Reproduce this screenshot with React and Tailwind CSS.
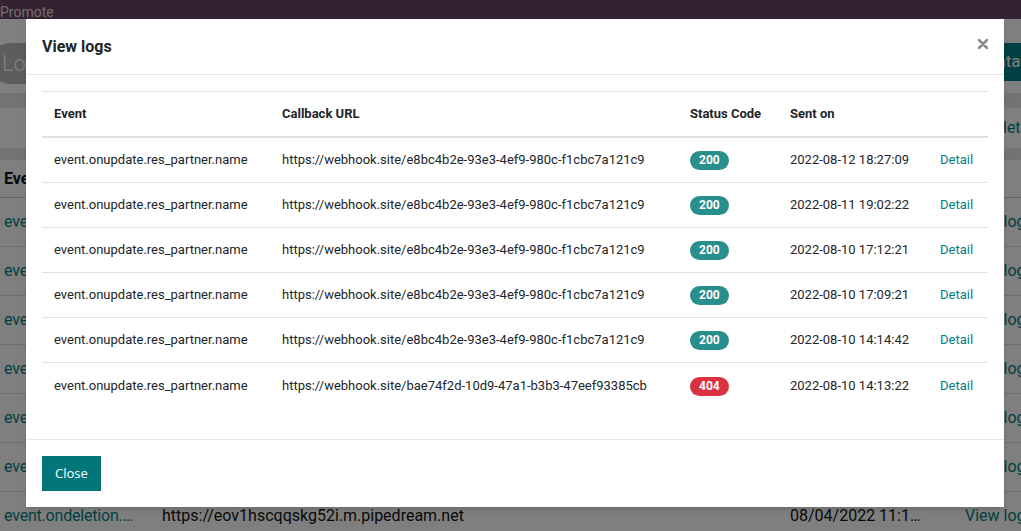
const logs = [
  { url: 'https://webhook.site/e8bc4b2e-93e3-4ef9-980c-f1cbc7a121c9', code: 200, sent: '2022-08-12 18:27:09' },
  { url: 'https://webhook.site/e8bc4b2e-93e3-4ef9-980c-f1cbc7a121c9', code: 200, sent: '2022-08-11 19:02:22' },
  { url: 'https://webhook.site/e8bc4b2e-93e3-4ef9-980c-f1cbc7a121c9', code: 200, sent: '2022-08-10 17:12:21' },
  { url: 'https://webhook.site/e8bc4b2e-93e3-4ef9-980c-f1cbc7a121c9', code: 200, sent: '2022-08-10 17:09:21' },
  { url: 'https://webhook.site/e8bc4b2e-93e3-4ef9-980c-f1cbc7a121c9', code: 200, sent: '2022-08-10 14:14:42' },
  { url: 'https://webhook.site/bae74f2d-10d9-47a1-b3b3-47eef93385cb', code: 404, sent: '2022-08-10 14:13:22' },
];

const webhooks = [
  { event: 'event.onupdate.res_partner.name', url: 'https://webhook.site/e8bc4b2e-93e3-4ef9-980c-f1cbc7a121c9', date: '08/12/2022 18:2…' },
  { event: 'event.oncreate.res_partner', url: 'https://webhook.site/e8bc4b2e-93e3-4ef9-980c-f1cbc7a121c9', date: '08/11/2022 19:0…' },
  { event: 'event.oncreate.sale_order', url: 'https://webhook.site/e8bc4b2e-93e3-4ef9-980c-f1cbc7a121c9', date: '08/10/2022 17:1…' },
  { event: 'event.onupdate.sale_order', url: 'https://webhook.site/e8bc4b2e-93e3-4ef9-980c-f1cbc7a121c9', date: '08/10/2022 17:0…' },
  { event: 'event.ondeletion.sale_order', url: 'https://webhook.site/e8bc4b2e-93e3-4ef9-980c-f1cbc7a121c9', date: '08/10/2022 14:1…' },
  { event: 'event.onupdate.product', url: 'https://webhook.site/bae74f2d-10d9-47a1-b3b3-47eef93385cb', date: '08/05/2022 09:4…' },
  { event: 'event.ondeletion.…', url: 'https://eov1hscqqskg52i.m.pipedream.net', date: '08/04/2022 11:1…' },
];

// page underneath the dialog
function Background() {
  return (
    <div className="flex flex-col">
      <div className="h-[19px] overflow-hidden bg-[#6a4260] pt-[4px] text-[14px] leading-[17px] text-white/80">
        Promote
      </div>
      <div className="flex h-[74px] justify-between pt-[24px]">
        <div className="-ml-[10px] flex h-[41px] items-center rounded-full bg-[#bababa] pl-[12px] pr-[24px] text-[22px] font-light text-white">
          Logs
        </div>
        <div className="-mr-[30px] flex h-[38px] items-center bg-[#017e84] px-[16px] text-[17px] text-white">
          Contact
        </div>
      </div>
      <div className="h-[15px] bg-[#e6e6e6]" />
      <div className="flex h-[40px] items-center pl-[984px] text-[16px] text-[#017e84] whitespace-nowrap">
        Delete
      </div>
      <div className="h-[12px] bg-[#e6e6e6]" />
      <div className="grid h-[38px] grid-cols-[162px_628px_175px_1fr] items-center border-b border-[#cfcfcf] text-[16px] font-bold text-[#111]">
        <div className="pl-[4px]">Event</div>
        <div>Callback URL</div>
        <div>Create Date</div>
        <div />
      </div>
      {webhooks.map((w, i) => (
        <div
          key={i}
          className="grid h-[49px] grid-cols-[162px_628px_175px_1fr] items-center border-b border-[#dcdcdc] text-[16px] whitespace-nowrap text-[#111]"
        >
          <div className="overflow-hidden pl-[4px] tracking-[-0.2px] text-[#017e84]">{w.event}</div>
          <div className="overflow-hidden">{w.url}</div>
          <div>{w.date}</div>
          <div className="text-[#017e84]">View logs</div>
        </div>
      ))}
    </div>
  );
}

function Badge({ code }) {
  const ok = code < 400;
  return (
    <span
      className={
        'inline-block rounded-full px-[9px] text-[12px] font-bold leading-[19px] text-white ' +
        (ok ? 'bg-[#288f8c]' : 'bg-[#da3340]')
      }
    >
      {code}
    </span>
  );
}

function LogsDialog() {
  return (
    <div className="absolute left-[26px] top-[19px] w-[978px] bg-white text-[#212529] shadow-md">
      <div className="flex h-[56px] items-center justify-between border-b border-[#e5e7eb] px-4">
        <h4 className="text-[16px] font-bold">View logs</h4>
        <button className="-mt-[5px] text-[#8a8a8a]">
          <svg width="10" height="10" viewBox="0 0 10 10">
            <path d="M1 1L9 9M9 1L1 9" stroke="currentColor" strokeWidth="2.6" strokeLinecap="round" />
          </svg>
        </button>
      </div>
      <div className="p-4">
        <div className="mb-[15px] border-t border-[#dee2e6] text-[13px]">
          <div className="grid h-[46px] grid-cols-[228px_408px_100px_150px_60px] items-center border-b-2 border-[#dee2e6] font-bold">
            <div className="px-3">Event</div>
            <div className="px-3">Callback URL</div>
            <div className="px-3">Status Code</div>
            <div className="px-3">Sent on</div>
            <div className="px-3" />
          </div>
          {logs.map((log, i) => (
            <div
              key={i}
              className={
                'grid h-[45px] grid-cols-[228px_408px_100px_150px_60px] items-center whitespace-nowrap ' +
                (i < logs.length - 1 ? 'border-b border-[#dee2e6]' : '')
              }
            >
              <div className="px-3">event.onupdate.res_partner.name</div>
              <div className="px-3">{log.url}</div>
              <div className="px-3">
                <Badge code={log.code} />
              </div>
              <div className="px-3">{log.sent}</div>
              <div className="px-3 text-[#017e84]">Detail</div>
            </div>
          ))}
        </div>
      </div>
      <div className="border-t border-[#e5e7eb] p-4">
        <button className="h-[35px] bg-[#01777c] px-[13px] font-['Open_Sans'] text-[13px] text-white">
          Close
        </button>
      </div>
    </div>
  );
}

export default function App() {
  return (
    <div className="relative h-[531px] w-[1021px] overflow-hidden bg-white font-['Roboto',sans-serif]">
      <Background />
      <div className="absolute inset-0 bg-black/50" />
      <LogsDialog />
    </div>
  );
}
